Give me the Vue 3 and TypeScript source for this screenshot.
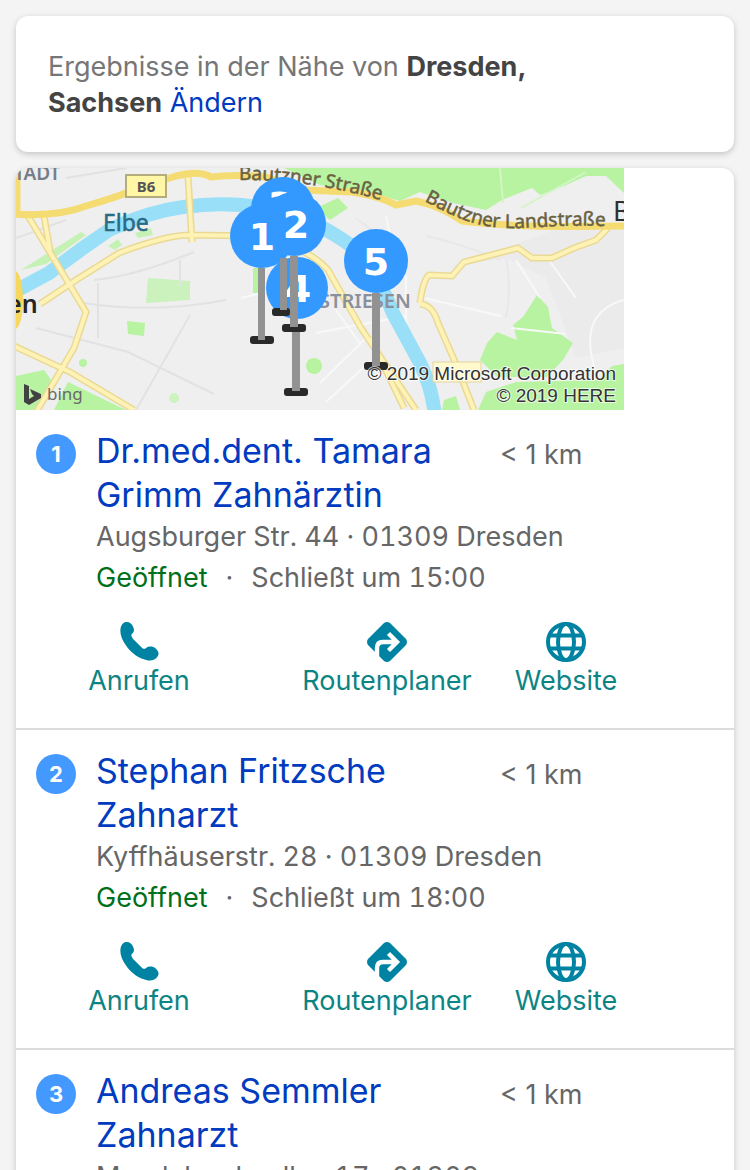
<script setup lang="ts">
interface Place {
  id: number
  name: string
  distance: string
  address: string
  closes: string
}

const places: Place[] = [
  { id: 1, name: 'Dr.med.dent. Tamara Grimm Zahnärztin', distance: '< 1 km', address: 'Augsburger Str. 44 · 01309 Dresden', closes: 'Schließt um 15:00' },
  { id: 2, name: 'Stephan Fritzsche Zahnarzt', distance: '< 1 km', address: 'Kyffhäuserstr. 28 · 01309 Dresden', closes: 'Schließt um 18:00' },
  { id: 3, name: 'Andreas Semmler Zahnarzt', distance: '< 1 km', address: 'Mendelssohnallee 17 · 01309 Dresden', closes: 'Schließt um 18:00' },
]
</script>

<template>
  <main class="page">
    <section class="card location">
      <p>Ergebnisse in der Nähe von <strong>Dresden, Sachsen</strong> <a href="#">Ändern</a></p>
    </section>

    <section class="card results">
      <svg class="map" viewBox="0 0 608 242" role="img" aria-label="Karte von Dresden">
        <defs>
          <path id="street-label" d="M223 12 Q293 11 372 34" />
          <path id="country-road-label" d="M408 33 C442 51 462 59 490 60 S545 55 600 59" />
        </defs>
        <rect width="608" height="242" fill="#efefef" />
        <path fill="#ebebeb" d="M430 100 L545 60 L608 62 V180 L560 190 L530 110 L490 90Z" />

        <g fill="#b7f3a0">
          <path d="M268 0 L304 17 L364 27 L384 33 L404 24 L437 35 L470 42 L486 32 L516 20 L524 27 L548 18 L570 8 L590 8 L608 25 V0Z" />
          <path d="M300 40 L322 30 L332 40 L314 52Z" />
          <path d="M521 127 L532 139 L536 160 L557 175 L547 192 L531 209 H481 L464 192 L471 175 L481 164 L501 172 L497 157 L507 149Z" />
          <path d="M470 224 L500 214 L582 212 L596 198 L608 196 V242 H462Z" />
          <path d="M111 153 L129 155 L128 168 L112 166Z" />
          <path d="M0 208 L28 202 L38 216 L22 242 H0Z M38 242 L52 214 L110 242Z" />
          <path d="M5 102 L65 64 L70 67 L30 96Z M92 78 L102 71 L106 77 L99 82Z M119 65 L135 60 L137 67 L122 70Z" opacity=".75" />
          <path d="M132 110 L174 113 L174 132 L130 135Z" opacity=".65" />
          <circle cx="298" cy="198" r="8" />
          <circle cx="67" cy="195" r="4" />
          <circle cx="158" cy="230" r="5" opacity=".6" />
          <path d="M237 100 h8 v25 h-8z M428 232 l12-4 4 14h-18z" />
        </g>

        <g fill="none" stroke="#e2e2e4" stroke-width="2">
          <path d="M78 112 Q120 108 178 84 M68 135 Q138 146 210 132 M20 160 L112 184 L198 226 M174 147 L120 242 M82 115 V170 M164 92 V118 M0 70 L50 52 M50 10 L110 0" />
        </g>
        <g fill="none" stroke="#f8f8f8" stroke-width="2">
          <path d="M370 48 Q374 72 390 110 V160 M300 165 L390 148 M320 142 L345 177 M304 215 L352 168 M310 234 L358 190 M500 92 L524 130 M530 88 L560 130 M495 160 L550 166 M608 132 Q560 145 580 205 M408 130 L485 148 M225 130 L250 124" />
          <path d="M484 0 L487 35 M505 40 L570 4" stroke="#d3f5c6" />
          <path d="M410 68 Q440 74 485 92 M490 90 Q496 120 490 150 M340 50 L372 75" stroke="#e8e8ea" />
        </g>

        <path class="water" d="M-8 127 L7 119 L33 105 L67 80 L93 62 Q130 44 167 39 Q210 33 248 40 Q292 46 337 79 Q357 96 377 145 L404 195 Q416 219 419 248" />

        <g class="road-edge">
          <path d="M12 48 L70 144 L58 180 L18 248 M24 136 L60 112 L103 85 Q150 67 174 67 L240 68 Q292 79 312 102 Q325 125 345 160 L400 242 M172 8 L176 74 M28 48 L34 82 M-2 178 L54 204 L118 242" />
          <path d="M388 240 L354 170 M404 135 Q407 112 413 107 L436 108 L448 94 L502 80 L516 90 H536 L558 80 L580 72 L592 60 M404 136 Q417 137 422 155 L440 196 L458 242" />
        </g>
        <g class="road">
          <path d="M12 48 L70 144 L58 180 L18 248 M24 136 L60 112 L103 85 Q150 67 174 67 L240 68 Q292 79 312 102 Q325 125 345 160 L400 242 M172 8 L176 74 M28 48 L34 82 M-2 178 L54 204 L118 242" />
          <path d="M388 240 L354 170 M404 135 Q407 112 413 107 L436 108 L448 94 L502 80 L516 90 H536 L558 80 L580 72 L592 60 M404 136 Q417 137 422 155 L440 196 L458 242" />
        </g>
        <g fill="none" stroke="#f5dc72" stroke-width="7">
          <path d="M-2 46 Q42 49 70 38 Q105 28 125 19 L160 8 Q182 2 195 9 Q222 6 250 9 L288 22 L336 24 Q366 29 380 37 L400 33 Q425 38 446 53 Q500 60 608 58 M1 0 V48" />
        </g>
        <ellipse cx="-1" cy="132" rx="8" ry="29" fill="#f8d75f" />

        <rect x="110" y="7" width="40" height="22" fill="#fff6a6" stroke="#b5ac7b" stroke-width="2" />
        <rect x="417" y="194" width="48" height="20" fill="#fff9cc" stroke="#e3d69e" />
        <text x="130" y="24" text-anchor="middle" class="label" font-size="15" font-weight="700" fill="#555">B6</text>
        <text x="-2" y="12" class="label" font-size="19" font-weight="600" fill="#777d88">TADT</text>
        <text x="87" y="63" class="label" font-size="23" fill="#296a85" stroke="#296a85" stroke-width=".5">Elbe</text>
        <text x="-9" y="145" class="label" font-size="25" font-weight="600" fill="#252525">en</text>
        <text x="303" y="140" class="label" font-size="20" font-weight="600" fill="#8b909d">STRIESEN</text>
        <text class="label street" font-size="19"><textPath href="#street-label">Bautzner Straße</textPath></text>
        <text class="label street" font-size="19"><textPath href="#country-road-label">Bautzner Landstraße</textPath></text>
        <text x="597" y="53" class="label" font-size="27" fill="#303030">B</text>

        <g font-family="'DejaVu Sans', sans-serif" font-size="38" font-weight="700" fill="#fff" text-anchor="middle">
          <circle cx="267" cy="41" r="32" fill="#3399ff" />
          <text x="265" y="51">3</text>
          <circle cx="281" cy="120" r="31" fill="#3399ff" />
          <text x="282" y="134">4</text>
          <circle cx="278" cy="56" r="32" fill="#3399ff" />
          <circle cx="246" cy="68" r="32" fill="#3399ff" />
          <text x="246" y="82">1</text>
          <text x="280" y="70">2</text>
          <circle cx="360" cy="93" r="32" fill="#3399ff" />
          <text x="360" y="107">5</text>
        </g>
        <g fill="#292929">
          <rect x="234" y="168" width="24" height="8" rx="3" />
          <rect x="256" y="140" width="18" height="8" rx="3" />
          <rect x="266" y="156" width="24" height="8" rx="3" />
          <rect x="268" y="220" width="24" height="8" rx="3" />
          <rect x="348" y="194" width="24" height="8" rx="3" />
        </g>
        <g fill="#929292">
          <rect x="242" y="100" width="7" height="72" />
          <rect x="264" y="90" width="7" height="52" />
          <rect x="276" y="164" width="8" height="59" />
          <rect x="274" y="88" width="8" height="71" />
          <rect x="356" y="125" width="8" height="73" />
        </g>

        <path fill="#424242" d="M8 216 L13 218 V231 L18 228 L16 226 L14 221 L25 226 V230 L13 237 L8 234Z" />
        <text x="31" y="232" class="label" font-size="17" fill="#696969">bing</text>
        <g class="copyright" text-anchor="end">
          <text x="600" y="212">© 2019 Microsoft Corporation</text>
          <text x="600" y="234">© 2019 HERE</text>
        </g>
      </svg>

      <ol class="places">
        <li v-for="place in places" :key="place.id" class="place">
          <span class="badge">{{ place.id }}</span>
          <h2><a href="#">{{ place.name }}</a></h2>
          <span class="distance">{{ place.distance }}</span>
          <div class="details">
            <p class="address">{{ place.address }}</p>
            <p class="status"><span class="open">Geöffnet</span><span>·</span><span>{{ place.closes }}</span></p>
          </div>
          <nav class="actions" :aria-label="place.name">
            <a href="#">
              <svg viewBox="0 0 40 40" aria-hidden="true">
                <path fill="#0083a3" d="M7.7 0 C11 0 13 2 14.4 5.4 C15.6 8.4 14.8 10.4 12.6 12 C12 14 13 15.5 14.6 17.4 L22.4 25.2 C24 27 25.6 27.4 27 26 C30 24 34 24.2 36.6 26.4 C39.6 28.8 40.4 31.6 38.6 34.4 C36.6 37.6 33 39 29 38.4 C20 37 12 31 7 23.6 C3 18 1 12.4 1.4 7.4 C2 2.6 4.4 0 7.7 0Z" />
              </svg>
              <span>Anrufen</span>
            </a>
            <a href="#">
              <svg viewBox="0 0 40 40" aria-hidden="true">
                <path fill="#0083a3" d="M17 1 Q20 -1 23 1 L39 17 Q41 20 39 23 L23 39 Q20 41 17 39 L1 23 Q-1 20 1 17Z" />
                <path fill="none" stroke="#fff" stroke-width="4.4" d="M10 34 V26 Q10 20 16 20 H29 M21.5 11.5 L30 20 L21.5 28.5" />
              </svg>
              <span>Routenplaner</span>
            </a>
            <a href="#">
              <svg viewBox="0 0 40 40" aria-hidden="true">
                <g fill="none" stroke="#0083a3" stroke-width="4">
                  <circle cx="20" cy="20" r="18" />
                  <ellipse cx="20" cy="20" rx="8" ry="18" />
                  <path d="M4 13.5 H36 M4 26.5 H36" />
                </g>
              </svg>
              <span>Website</span>
            </a>
          </nav>
        </li>
      </ol>
    </section>
  </main>
</template>

<style>
body {
  margin: 0;
  background: #f4f4f4;
}
</style>

<style scoped>
.page {
  box-sizing: border-box;
  height: 100vh;
  padding: 16px;
  overflow-y: auto;
  scrollbar-width: none;
  display: flex;
  flex-direction: column;
  gap: 16px;
  font-family: Inter, 'Liberation Sans', sans-serif;
  font-size: 27px;
  line-height: 36px;
  color: #666;
}

p, h2, ol {
  margin: 0;
  padding: 0;
}

a {
  color: #003bc0;
  text-decoration: none;
}

.card {
  flex-shrink: 0;
  border-radius: 12px;
  background: #fff;
  box-shadow: 0 2px 6px rgba(0, 0, 0, 0.2);
}

.location {
  padding: 33px 32px 31px;
  color: #767676;
}

.location p {
  max-width: 520px;
}

.location strong {
  font-weight: 700;
  color: #444;
}

.results {
  overflow: hidden;
}

.map {
  display: block;
  width: 100%;
  max-width: 608px;
}

.label {
  font-family: 'Noto Sans', sans-serif;
}

.street {
  fill: #6a6243;
  stroke: #6a6243;
  stroke-width: 0.5px;
}

.water {
  fill: none;
  stroke: #98dff7;
  stroke-width: 14px;
}

.road-edge {
  fill: none;
  stroke: #e9d995;
  stroke-width: 7px;
}

.road {
  fill: none;
  stroke: #fff2b5;
  stroke-width: 4px;
}

.copyright {
  font-family: 'Liberation Sans', sans-serif;
  font-size: 19px;
  fill: #333;
  stroke: #fff;
  stroke-width: 2px;
  stroke-opacity: 0.7;
  paint-order: stroke;
}

.places {
  list-style: none;
}

.place {
  display: grid;
  grid-template-columns: 40px 1fr 214px;
  column-gap: 20px;
  padding: 19px 20px 29px;
  border-bottom: 2px solid #dcdcdc;
}

.badge {
  height: 40px;
  margin-top: 5px;
  border-radius: 50%;
  background: #4499ff;
  color: #fff;
  font-size: 22px;
  font-weight: 700;
  line-height: 40px;
  text-align: center;
}

h2 {
  font-size: 34px;
  font-weight: 400;
  line-height: 44px;
}

.distance {
  line-height: 52px;
}

.details {
  grid-column: 2 / 4;
  max-width: 480px;
  font-variant-numeric: tabular-nums;
}

.address {
  line-height: 40px;
}

.status {
  display: flex;
  gap: 18px;
  line-height: 42px;
}

.open {
  color: #00701a;
}

.actions {
  grid-column: 1 / 4;
  display: grid;
  grid-template-columns: 246px 250px 108px;
  margin: 23px -20px 0;
}

.actions a {
  display: flex;
  flex-direction: column;
  align-items: center;
  line-height: 37px;
  color: #0c8484;
}

.actions svg {
  width: 40px;
  height: 40px;
}
</style>
